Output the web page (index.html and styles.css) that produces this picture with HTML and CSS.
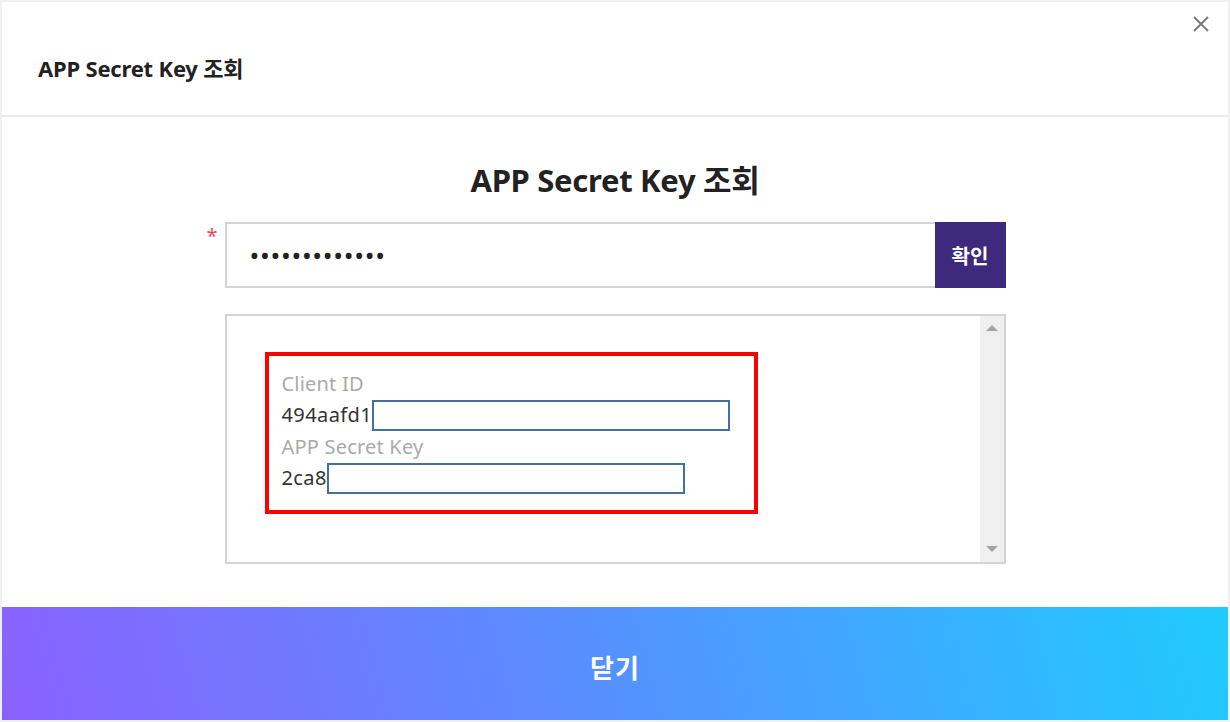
FILE: index.html
```html
<!DOCTYPE html>
<html lang="ko">
<head>
<meta charset="utf-8">
<link rel="stylesheet" href="styles.css">
</head>
<body>
<div class="dialog">
  <header class="dlg-header">
    <h2 class="dlg-title">APP Secret Key 조회</h2>
    <span class="close" aria-label="close">
      <svg width="18" height="18" viewBox="0 0 18 18"><path d="M2 2 L16 16 M16 2 L2 16" stroke="#7a7a7a" stroke-width="2" fill="none"/></svg>
    </span>
  </header>
  <main class="dlg-body">
    <h1 class="main-title">APP Secret Key 조회</h1>
    <div class="form-row">
      <span class="req">*</span>
      <div class="input">•••••••••••••</div>
      <button class="btn-confirm">확인</button>
    </div>
    <div class="result">
      <div class="result-content">
        <div class="mark">
          <div class="label">Client ID</div>
          <div class="value">494aafd1<span class="redact r1"></span></div>
          <div class="label">APP Secret Key</div>
          <div class="value">2ca8<span class="redact r2"></span></div>
        </div>
      </div>
      <div class="scrollbar">
        <span class="arrow up"></span>
        <span class="arrow down"></span>
      </div>
    </div>
  </main>
  <button class="btn-close">닫기</button>
</div>
</body>
</html>
```

FILE: styles.css
```css
html, body {
  margin: 0;
  padding: 0;
}
body {
  background: #f0f0f0;
  width: 1230px;
  height: 722px;
  padding: 2px;
  box-sizing: border-box;
  font-family: "Noto Sans", "Noto Sans CJK KR", sans-serif;
  color: #222;
}
.dialog {
  width: 1226px;
  height: 718px;
  background: #fff;
  display: flex;
  flex-direction: column;
}
.dlg-header {
  position: relative;
  height: 113px;
  border-bottom: 2px solid #e8ebef;
  display: flex;
  align-items: center;
  padding-left: 36px;
}
.dlg-title {
  margin: 0;
  font-size: 22px;
  font-weight: 700;
  color: #222;
  letter-spacing: -0.2px;
  padding-top: 16px;
}
.close {
  position: absolute;
  right: 18px;
  top: 13px;
  width: 18px;
  height: 18px;
}
.dlg-body {
  flex: 1;
  display: flex;
  flex-direction: column;
  align-items: center;
}
.main-title {
  margin: 42px 0 0;
  font-size: 31px;
  font-weight: 700;
  line-height: 42px;
  color: #222;
  letter-spacing: -0.3px;
}
.form-row {
  position: relative;
  margin-top: 21px;
  display: flex;
  width: 781px;
  height: 66px;
}
.req {
  position: absolute;
  left: -18px;
  top: 4px;
  color: #f0474f;
  font-size: 20px;
  line-height: 20px;
}
.input {
  flex: 1;
  border: 2px solid #d4d4d4;
  border-right: none;
  display: flex;
  align-items: center;
  padding-left: 23px;
  font-size: 26px;
  letter-spacing: 0.7px;
  color: #222;
}
.btn-confirm {
  width: 71px;
  border: none;
  background: #3e2a7d;
  color: #fff;
  font-family: inherit;
  font-size: 20px;
  font-weight: 700;
  padding: 0;
}
.result {
  margin-top: 26px;
  width: 781px;
  height: 250px;
  box-sizing: border-box;
  border: 2px solid #d4d4d4;
  display: flex;
}
.result-content {
  flex: 1;
  padding: 36px 0 0 38px;
}
.mark {
  width: 493px;
  height: 162px;
  box-sizing: border-box;
  border: 4px solid #ff0000;
  padding: 12px 0 0 13px;
}
.label {
  font-size: 20px;
  line-height: 31px;
  color: #aaaaaa;
  letter-spacing: 0.2px;
}
.value {
  font-size: 20px;
  line-height: 32px;
  color: #333;
  display: flex;
  align-items: center;
  letter-spacing: 0.4px;
}
.redact {
  display: inline-block;
  box-sizing: border-box;
  height: 31px;
  border: 2px solid #44709e;
}
.r1 { width: 358px; }
.r2 { width: 358px; }
.scrollbar {
  width: 24px;
  background: #f0f0f0;
  display: flex;
  flex-direction: column;
  justify-content: space-between;
  align-items: center;
  padding: 9px 0 10px;
}
.arrow {
  width: 0;
  height: 0;
  border-left: 6px solid transparent;
  border-right: 6px solid transparent;
}
.arrow.up { border-bottom: 6px solid #a3a3a3; }
.arrow.down { border-top: 6px solid #a3a3a3; }
.btn-close {
  height: 113px;
  border: none;
  padding: 6px 0 0;
  background: linear-gradient(75deg, #8a61ff 0%, #5a8cff 45%, #1fcbff 100%);
  color: #fff;
  font-family: inherit;
  font-size: 26px;
  font-weight: 700;
  letter-spacing: 1px;
}
```
